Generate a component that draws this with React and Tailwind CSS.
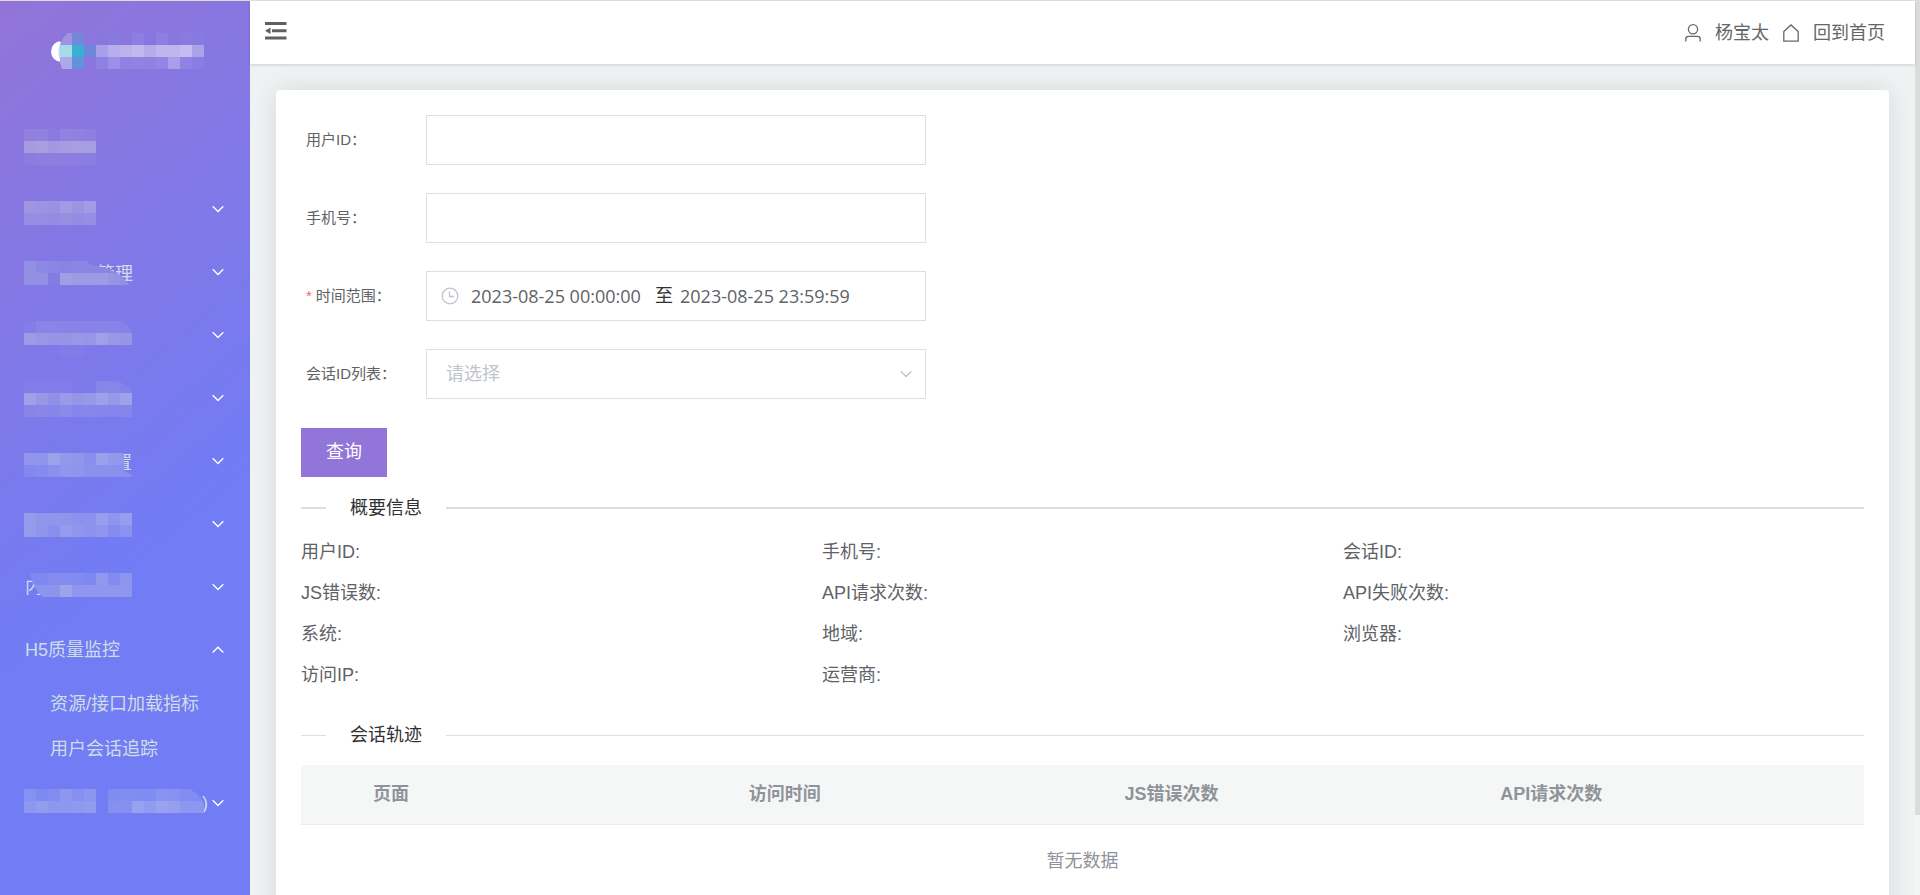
import React from "react";

const CELL = 12;

/* Blocks of tinted cells that hide a menu label. */
function Mosaic({ id, rows, y, clip, base }) {
  const cols = Math.max(...rows.map((r) => r.length));
  return (
    <svg
      aria-hidden="true"
      className="pointer-events-none absolute left-6 top-0"
      width={cols * CELL}
      height="63"
      shapeRendering="crispEdges"
    >
      {clip && (
        <clipPath id={id}>
          <path d={clip} />
        </clipPath>
      )}
      <g transform={`translate(0 ${y})`}>
        <g clipPath={clip ? `url(#${id})` : undefined}>
          {base && <rect width={cols * CELL} height={rows.length * CELL} fill={base} />}
          {rows.map((row, j) =>
            row.map((a, i) =>
              a ? (
                <rect
                  key={`${i}-${j}`}
                  x={i * CELL}
                  y={j * CELL}
                  width={CELL}
                  height={CELL}
                  fill="#d7dfe2"
                  fillOpacity={a / 100}
                />
              ) : null
            )
          )}
        </g>
      </g>
    </svg>
  );
}

const LOGO_ROWS = [
  ["#a193e4", "#7488da", "", "#8778df", "#8879df", "", "#8d7ee1", "#8577df", "#8d7ee1", "#8678df", "#897be1", "#877ae0"],
  ["#a5dbe8", "#39afd3", "#6f87db", "#a99ee9", "#b9aeec", "#bcb2ed", "#c1b8ee", "#b6acec", "#bfb6ee", "#bfb6ee", "#c5bcf1", "#aca2ea"],
  ["#aba9e8", "#6491da", "", "#8f81e2", "#9c90e6", "#8f82e3", "#9083e3", "#8f82e3", "#9285e4", "#a99eec", "#8f83e3", "#8b7ee2"],
];

function Logo() {
  return (
    <svg width="160" height="44" viewBox="48 30 160 44" role="img" aria-label="logo">
      <circle cx="61.5" cy="51.5" r="10.5" fill="#fff" />
      <path d="M60 44Q57 51 60 60L63 64H74V38H64Z" fill="#d5d2f3" />
      <path d="M62 64L59 62H74V70H62Z" fill="#8577df" />
      <path d="M60 40V33H75V42H60Z" fill="#8a76dc" />
      <clipPath id="logo-clip">
        <path d="M68 33H204V69H62L60 62V45Q62 38 68 33Z" />
      </clipPath>
      <g clipPath="url(#logo-clip)" shapeRendering="crispEdges">
        {LOGO_ROWS.map((row, j) =>
          row.map((c, i) =>
            c ? <rect key={`${i}-${j}`} x={60 + i * 12} y={33 + j * 12} width="12" height="12" fill={c} /> : null
          )
        )}
      </g>
    </svg>
  );
}

function Chevron({ up }) {
  return (
    <svg width="12" height="8" viewBox="0 0 12 8" fill="none" stroke="currentColor" strokeWidth="1.4" aria-hidden="true">
      <path d={up ? "M.7 6.5L6 1.3l5.3 5.2" : "M.7 1.3L6 6.5l5.3-5.2"} />
    </svg>
  );
}

const MENU = [
  {
    y: 15,
    leaf: true,
    rows: [[10, 10, 3, 11, 10, 9], [36, 40, 33, 36, 38, 38], [6, 8, 8, 8, 7, 6]],
  },
  { y: 24, rows: [[30, 28, 25, 35, 28, 36], [22, 22, 20, 24, 20, 22]] },
  {
    y: 21,
    text: "管理",
    textClass: "pl-[97px] pt-1",
    base: "#7f78e5",
    clip: "M0 0H63L65 3Q95 8 105 24H0Z",
    rows: [[24, 16, 14, 12, 14, 14, 14, 14, 14], [24, 24, 4, 38, 34, 34, 34, 28, 24]],
  },
  {
    y: 18,
    clip: "M0 0H98Q105 4 108 12V36H0Z",
    rows: [[5, 12, 12, 11, 10, 11, 11, 10, 9], [34, 30, 28, 28, 30, 28, 38, 30, 28], [0, 0, 0, 3, 3, 2, 0, 2, 0]],
  },
  {
    y: 15,
    clip: "M0 0H92Q104 3 108 10V36H0Z",
    rows: [[3, 4, 4, 5, 2, 2, 12, 12, 9], [38, 30, 22, 32, 28, 30, 38, 30, 40], [12, 14, 12, 16, 12, 14, 12, 11, 12]],
  },
  {
    y: 24,
    text: "置",
    textClass: "pl-[114px] pt-1",
    base: "#757bf0",
    clip: "M0 0H100V18L108 22V24H0Z",
    rows: [[28, 26, 40, 30, 28, 20, 38, 30, 28], [14, 16, 22, 28, 26, 22, 22, 22, 22]],
  },
  { y: 21, rows: [[32, 28, 28, 26, 24, 24, 36, 26, 34], [32, 26, 20, 32, 28, 24, 28, 18, 24]] },
  {
    y: 18,
    text: "内",
    textClass: "pl-[25px]",
    base: "#727bf3",
    clip: "M5 0H108V24H19Q12 18 10 12Z",
    rows: [[14, 14, 18, 18, 16, 14, 30, 16, 26], [26, 26, 26, 42, 28, 28, 28, 28, 28]],
  },
];

const LAST_ITEM = {
  y: 18,
  text: ")",
  textClass: "pl-[202px]",
  base: "#717cf5",
  clip: "M0 0H166Q178 7 180 16V24H0Z",
  rows: [
    [22, 14, 18, 28, 20, 26, 0, 16, 18, 16, 16, 24, 22, 18, 16],
    [28, 34, 28, 28, 30, 32, 2, 20, 20, 38, 32, 40, 36, 28, 28],
  ],
};

function MenuItem({ item, index }) {
  return (
    <li>
      <button
        type="button"
        aria-label={`菜单 ${index + 1}`}
        className="relative flex h-[63px] w-full items-center text-left"
      >
        {item.text && <span className={item.textClass}>{item.text}</span>}
        <Mosaic id={`menu-clip-${index}`} {...item} />
        {!item.leaf && (
          <span className="absolute right-[26px] text-white">
            <Chevron />
          </span>
        )}
      </button>
    </li>
  );
}

function Sidebar() {
  return (
    <aside className="w-[250px] shrink-0 overflow-hidden bg-[linear-gradient(140deg,#9274d8_0%,#717cf5_62%)] text-lg text-[#cfdde6]">
      <div className="flex h-[113px] items-start pl-12 pt-[29px]">
        <Logo />
      </div>
      <nav>
        <ul>
          {MENU.map((item, i) => (
            <MenuItem key={i} item={item} index={i} />
          ))}
          <li>
            <button type="button" aria-expanded="true" className="flex h-[63px] w-full items-center justify-between pl-[25px] pr-[26px]">
              H5质量监控
              <span className="text-white">
                <Chevron up />
              </span>
            </button>
            <ul>
              {["资源/接口加载指标", "用户会话追踪"].map((t) => (
                <li key={t}>
                  <a href="#" className="flex h-[45px] items-center pl-[50px]">
                    {t}
                  </a>
                </li>
              ))}
            </ul>
          </li>
          <MenuItem item={LAST_ITEM} index={MENU.length} />
        </ul>
      </nav>
    </aside>
  );
}

function Header() {
  return (
    <header className="relative flex h-[63px] shrink-0 items-center justify-between bg-white pl-[15px] pr-[30px] text-lg text-[#666] shadow-[0_1px_3px_rgba(0,0,0,0.15)]">
      <button type="button" aria-label="收起菜单" className="-mt-1">
        <svg width="22" height="18" viewBox="0 0 22 18" fill="#606060">
          <path d="M0 0h21.5v3H0zM7 7.2h14.500v3H7zM0 14.400h21.500v3H0zM0 8.700l5.500-3.300v6.600z" />
        </svg>
      </button>
      <div className="flex items-center">
        <svg width="16" height="18" viewBox="0 0 16 18" fill="none" stroke="currentColor" strokeWidth="1.3" aria-hidden="true">
          <circle cx="8" cy="5.300" r="4.600" />
          <path d="M.8 17.500v-2.500q0-2.600 2.800-2.600h8.800q2.800 0 2.800 2.600v2.500" />
        </svg>
        <span className="ml-3.5">杨宝太</span>
        <svg className="ml-3.5" width="16" height="18" viewBox="0 0 16 18" fill="none" stroke="currentColor" strokeWidth="1.3" aria-hidden="true">
          <path d="M.8 17.200V7.500L8 .9l7.200 6.600v9.700z" />
        </svg>
        <a href="#" className="ml-3.5">
          回到首页
        </a>
      </div>
    </header>
  );
}

function Field({ id, label, required, children }) {
  return (
    <div className="flex items-center">
      <label htmlFor={id} className="w-[125px] shrink-0 pl-[5px] text-[15px] text-[#606266]">
        {required && <span className="mr-1 text-[#f56c6c]">*</span>}
        {label}
      </label>
      {children}
    </div>
  );
}

const BOX = "h-[50px] w-[500px] border border-[#dcdfe6] bg-white text-lg text-[#606266]";

function Form() {
  return (
    <form onSubmit={(e) => e.preventDefault()}>
      <div className="flex flex-col gap-7">
        <Field id="uid" label="用户ID：">
          <input id="uid" type="text" className={`${BOX} px-5`} />
        </Field>
        <Field id="phone" label="手机号：">
          <input id="phone" type="text" className={`${BOX} px-5`} />
        </Field>
        <Field id="start" label="时间范围：" required>
          <div className={`${BOX} flex items-center pl-3.5`}>
            <svg width="18" height="18" viewBox="0 0 18 18" fill="none" stroke="#c0c4cc" strokeWidth="1.300" aria-hidden="true">
              <circle cx="9" cy="9" r="7.800" />
              <path d="M8.500 4.500v5h4.500" />
            </svg>
            <input
              id="start"
              type="text"
              defaultValue="2023-08-25 00:00:00"
              className="ml-3 w-[184px] font-['Open_Sans',sans-serif]"
            />
            <span className="w-[25px] text-[#303133]">至</span>
            <input
              type="text"
              aria-label="结束时间"
              defaultValue="2023-08-25 23:59:59"
              className="w-[184px] font-['Open_Sans',sans-serif]"
            />
          </div>
        </Field>
        <Field id="session" label="会话ID列表：">
          <div className="relative">
            <select id="session" defaultValue="" className={`${BOX} block appearance-none px-[19px] text-[#c0c4cc]`}>
              <option value="">请选择</option>
            </select>
            <span className="pointer-events-none absolute inset-y-0 right-3.5 flex items-center text-[#c0c4cc]">
              <Chevron />
            </span>
          </div>
        </Field>
      </div>
      <button type="submit" className="mt-[29px] block h-[49px] bg-[#9175d9] px-[25px] pb-0.5 text-lg text-white">
        查询
      </button>
    </form>
  );
}

function Divider({ title, lineClass, className }) {
  return (
    <div className={`flex h-6 items-center ${className}`}>
      <span className={`w-[25px] bg-[#dcdfe6] ${lineClass}`} />
      <h2 className="px-6 text-lg leading-6 text-[#303133]">{title}</h2>
      <span className={`flex-1 bg-[#dcdfe6] ${lineClass}`} />
    </div>
  );
}

const SUMMARY = [
  "用户ID:", "手机号:", "会话ID:",
  "JS错误数:", "API请求次数:", "API失败次数:",
  "系统:", "地域:", "浏览器:",
  "访问IP:", "运营商:",
];

export default function App() {
  return (
    <div className="flex h-screen overflow-hidden border-t border-[#dcdcdc] bg-[#eef2f3] font-['Liberation_Sans','Noto_Sans_CJK_SC',sans-serif]">
      <Sidebar />
      <div className="flex min-w-0 flex-1 flex-col">
        <Header />
        <main className="min-h-0 flex-1 overflow-hidden px-[26px] pt-[26px]">
          <section className="rounded bg-white p-[25px] shadow-[0_0_25px_rgba(0,0,0,0.1)]">
            <Form />
            <Divider title="概要信息" lineClass="h-0.5" className="mt-[19px]" />
            <ul className="mt-[11px] grid grid-cols-3 text-lg text-[#606266]">
              {SUMMARY.map((t) => (
                <li key={t} className="flex h-[41px] items-center">
                  {t}
                </li>
              ))}
            </ul>
            <Divider title="会话轨迹" lineClass="h-px" className="mt-7" />
            <table className="mt-[18px] w-full table-fixed text-lg text-[#909399]">
              <thead>
                <tr className="h-[59px] border-b border-[#e6ebf2] bg-[#f5f7f7] text-left">
                  <td className="w-[60px]" />
                  {["页面", "访问时间", "JS错误次数", "API请求次数"].map((t) => (
                    <th key={t} scope="col" className="px-3 font-bold">
                      {t}
                    </th>
                  ))}
                </tr>
              </thead>
              <tbody>
                <tr className="h-[74px]">
                  <td colSpan={5} className="text-center">
                    暂无数据
                  </td>
                </tr>
              </tbody>
            </table>
          </section>
        </main>
      </div>
      <div className="w-[5px] shrink-0 bg-[#f4f4f5]" aria-hidden="true">
        <div className="h-[91%] bg-[#dcdcdc]" />
      </div>
    </div>
  );
}
